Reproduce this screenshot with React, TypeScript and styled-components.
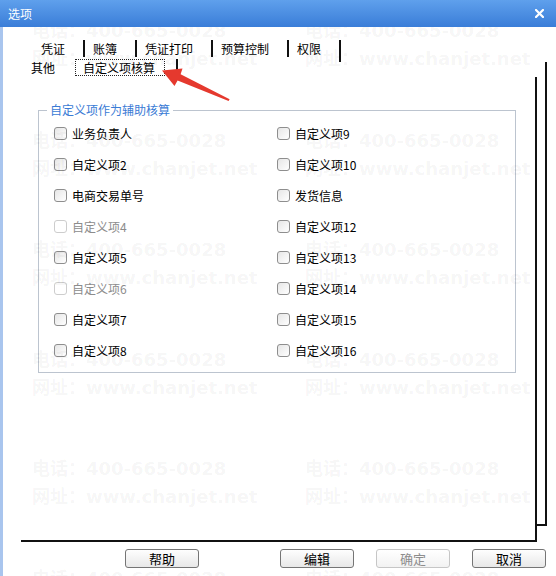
import styled, { createGlobalStyle } from 'styled-components';

const GlobalStyle = createGlobalStyle`
  html, body {
    margin: 0;
    padding: 0;
    background: #fff;
  }
  body {
    font-family: 'Noto Sans CJK SC', 'Noto Sans', sans-serif;
  }
  * {
    box-sizing: border-box;
  }
`;

const FONT = `'Noto Sans CJK SC', 'Noto Sans', sans-serif`;

const Window = styled.div`
  position: relative;
  width: 556px;
  height: 576px;
  display: flex;
  flex-direction: column;
  overflow: hidden;
  background: #fff;
  color: #000;
  font-family: ${FONT};
  font-size: 12px;
`;

const TitleBar = styled.div`
  flex: none;
  height: 27px;
  display: flex;
  align-items: center;
  justify-content: space-between;
  padding: 0 12px 0 8px;
  background: linear-gradient(#5fa0ec, #3a7dd8);
  color: #fff;
  font-size: 12px;
`;

const Body = styled.div`
  position: relative;
  flex: 1;
  display: flex;
  flex-direction: column;
  border-left: 3px solid #a9c5ee;
  overflow: hidden;
`;

// 탭 줄 (첫 줄 / 둘째 줄)
const TabRow = styled.div<{ $first?: boolean }>`
  display: flex;
  align-items: flex-start;
  height: ${({ $first }) => ($first ? '19px' : '17px')};
  margin-top: ${({ $first }) => ($first ? '13px' : '-3px')};
  padding-left: ${({ $first }) => ($first ? '30px' : '2px')};
  position: relative;
  z-index: 2;
`;

const Tab = styled.div<{ $tall?: boolean; $line?: boolean; $w?: number }>`
  height: ${({ $tall }) => ($tall ? '22px' : '17px')};
  line-height: 17px;
  padding: 0 18px 0 8px;
  width: ${({ $w }) => ($w ? `${$w}px` : 'auto')};
  border-right: ${({ $line }) => ($line === false ? 'none' : '2px solid #111')};
  white-space: nowrap;
`;

const ActiveTab = styled.div`
  height: 17px;
  padding: 0 11px 0 2px;
  border-right: 2px solid #111;
`;

const Focus = styled.span`
  display: block;
  height: 17px;
  line-height: 15px;
  padding: 0 9px 0 7px;
  border: 1px dotted #222;
`;

const BackPanel = styled.div`
  display: flex;
  flex-direction: column;
  margin: 3px 9px 0 18px;
  border-right: 2px solid #111;
  border-bottom: 2px solid #111;
`;

const Page = styled.div`
  position: relative;
  z-index: 1;
  height: 465px;
  margin: 1px 8px -18px 0;
  background: #fff;
  border-right: 2px solid #111;
  border-bottom: 2px solid #111;
  padding-top: 33px;
`;

const GroupBox = styled.div`
  position: relative;
  margin: 0 19px 0 17px;
  border: 1px solid #bcc4cf;
  padding: 7px 0 6px 15px;
  display: grid;
  grid-template-columns: 223px 1fr;
  grid-template-rows: repeat(8, 31px);
  grid-auto-flow: column;
`;

const GroupTitle = styled.span`
  position: absolute;
  top: -9px;
  left: 8px;
  padding: 0 3px;
  line-height: 16px;
  background: #fff;
  color: #3a7bd5;
`;

const CheckItem = styled.label<{ $disabled?: boolean }>`
  display: flex;
  align-items: center;
  gap: 5px;
  color: ${({ $disabled }) => ($disabled ? '#8c8c8c' : '#000')};
  line-height: 16px;
`;

const Box = styled.span<{ $disabled?: boolean }>`
  width: 13px;
  height: 13px;
  flex: none;
  border: 1px solid ${({ $disabled }) => ($disabled ? '#cdcdcd' : '#8e8e8e')};
  border-radius: 3px;
  background: ${({ $disabled }) => ($disabled ? '#fff' : 'linear-gradient(135deg, #e6e6e6, #fff)')};
`;

const ButtonRow = styled.div`
  display: flex;
  gap: 22px;
  margin-top: 23px;
  padding: 0 10px 0 122px;
`;

const Spacer = styled.div`
  flex: 1;
`;

const Button = styled.button`
  width: 74px;
  height: 19px;
  padding: 0;
  border: 1px solid #757575;
  border-radius: 3px;
  background: linear-gradient(#fefefe, #e8e8e8);
  font: 13px/17px ${FONT};
  color: #000;

  &:disabled {
    border-color: #c6c6c6;
    color: #8d8d8d;
    background: linear-gradient(#fff, #f2f2f2);
  }
`;

// 워터마크 (맨 위에 흐리게)
const Watermark = styled.div`
  position: absolute;
  top: -10px;
  left: 29px;
  z-index: 5;
  pointer-events: none;
  display: grid;
  grid-template-columns: 273px 273px;
  grid-auto-rows: 109.5px;
  font: bold 18px/28px 'DejaVu Sans', 'Noto Sans CJK SC', sans-serif;
  color: rgba(0, 0, 0, 0.05);
  white-space: nowrap;
`;

const Arrow = styled.svg`
  position: absolute;
  left: 158px;
  top: 58px;
  z-index: 6;
`;

const leftItems = [
  { label: '业务负责人' },
  { label: '自定义项2' },
  { label: '电商交易单号' },
  { label: '自定义项4', disabled: true },
  { label: '自定义项5' },
  { label: '自定义项6', disabled: true },
  { label: '自定义项7' },
  { label: '自定义项8' },
];

const rightItems = [
  '自定义项9',
  '自定义项10',
  '发货信息',
  '自定义项12',
  '自定义项13',
  '自定义项14',
  '自定义项15',
  '自定义项16',
].map((label) => ({ label, disabled: false }));

export default function App() {
  const items = [...leftItems, ...rightItems];
  return (
    <>
      <GlobalStyle />
      <Window>
        <TitleBar>
          <span>选项</span>
          <svg width="9" height="9" viewBox="0 0 9 9">
            <path d="M1 1 L8 8 M8 1 L1 8" stroke="#fff" strokeWidth="2.2" strokeLinecap="square" />
          </svg>
        </TitleBar>
        <Body>
          <TabRow $first>
            <Tab>凭证</Tab>
            <Tab>账簿</Tab>
            <Tab>凭证打印</Tab>
            <Tab>预算控制</Tab>
            <Tab $tall>权限</Tab>
          </TabRow>
          <BackPanel>
            <TabRow>
              <Tab $line={false} $w={50}>其他</Tab>
              <ActiveTab>
                <Focus>自定义项核算</Focus>
              </ActiveTab>
            </TabRow>
            <Page>
              <GroupBox>
                <GroupTitle>自定义项作为辅助核算</GroupTitle>
                {items.map((it) => (
                  <CheckItem key={it.label} $disabled={it.disabled}>
                    <Box $disabled={it.disabled} />
                    {it.label}
                  </CheckItem>
                ))}
              </GroupBox>
            </Page>
          </BackPanel>
          <ButtonRow>
            <Button>帮助</Button>
            <Spacer />
            <Button>编辑</Button>
            <Button disabled>确定</Button>
            <Button>取消</Button>
          </ButtonRow>
          <Watermark>
            {Array.from({ length: 12 }).map((_, i) => (
              <div key={i}>
                <div>电话：400-665-0028</div>
                <div>网址：www.chanjet.net</div>
              </div>
            ))}
          </Watermark>
        </Body>
        <Arrow width="76" height="46" viewBox="158 58 76 46">
          <polygon
            points="162,70.5 182.5,68.5 180.6,74.2 229.6,99.2 228.6,101 177.6,80.6 174.5,86"
            fill="#e5392e"
          />
        </Arrow>
      </Window>
    </>
  );
}
